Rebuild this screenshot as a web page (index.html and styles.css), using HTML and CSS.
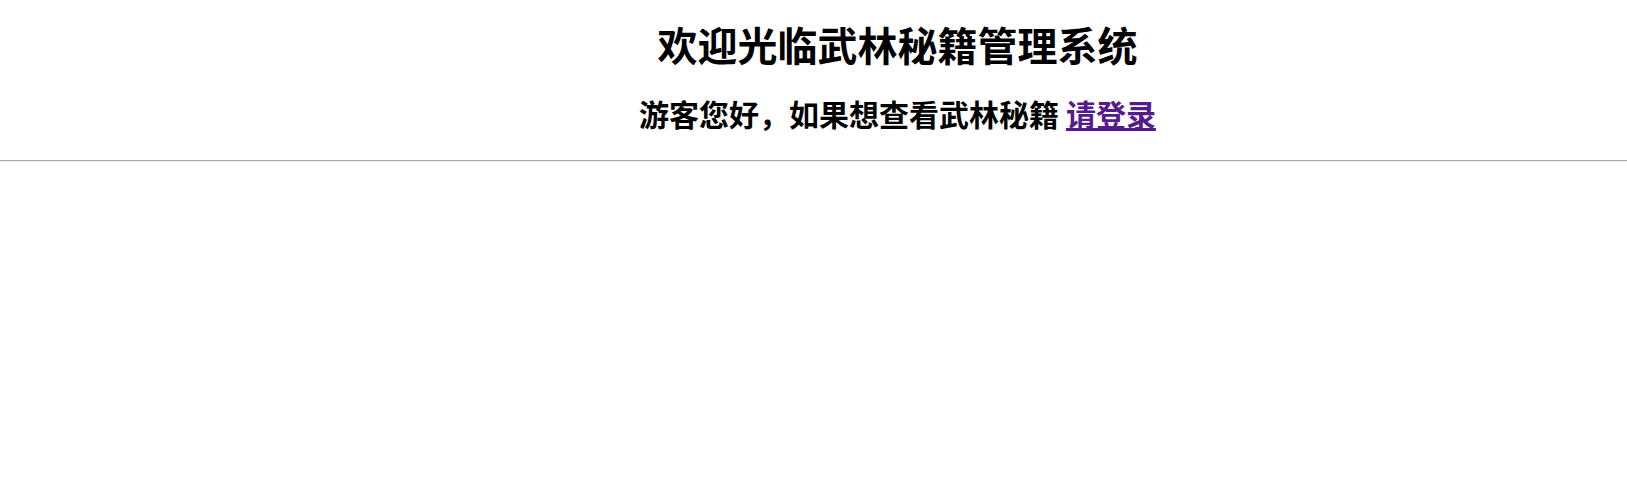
FILE: index.html
```html
<!DOCTYPE html>
<html lang="zh-CN">
<head>
<meta charset="utf-8">
<title>武林秘籍管理系统</title>
<link rel="stylesheet" href="styles.css">
</head>
<body>
<div class="header">
  <h1 class="title">欢迎光临武林秘籍管理系统</h1>
  <h2 class="welcome">游客您好，如果想查看武林秘籍 <a class="login" href="#">请登录</a></h2>
</div>
<hr class="divider">
</body>
</html>
```
FILE: styles.css
```css
html, body {
  margin: 0;
  padding: 0;
  background: #fff;
}
body {
  font-family: "Noto Sans CJK SC", "Noto Sans", sans-serif;
  color: #000;
}
.header {
  padding-left: 168px;
  text-align: center;
  display: flow-root;
}
.title {
  font-size: 40px;
  line-height: 45px;
  font-weight: bold;
  margin: 22px 0 0;
}
.welcome {
  font-size: 30px;
  line-height: 34px;
  font-weight: bold;
  margin: 29px 0 30px;
}
.login {
  color: #551a8b;
  text-decoration: underline;
}
.divider {
  margin: 0;
  height: 0;
  border: 0;
  border-top: 1px solid #aaa;
  border-bottom: 1px solid #eee;
}
```
